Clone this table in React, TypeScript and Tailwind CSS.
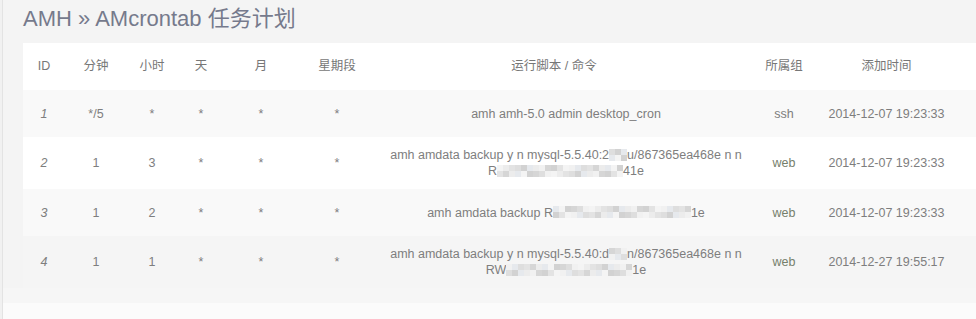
import React from "react";

const palette = [
  "bg-[#ececec]",
  "bg-[#dedede]",
  "bg-[#f4f4f4]",
  "bg-[#d6d6d6]",
  "bg-[#e6e9ed]",
  "bg-[#e3e3e3]",
  "bg-[#f1f1f1]",
  "bg-[#d2d2d2]",
];

// pixelated redaction block
const Mosaic = ({ width, seed = 0 }: { width: number; seed?: number }) => {
  const cells = Math.max(1, Math.round(width / 6));
  return (
    <span className="inline-flex flex-col align-middle -mt-[2px]">
      {[0, 1].map((row) => (
        <span key={row} className="flex">
          {Array.from({ length: cells }).map((_, i) => (
            <span
              key={i}
              className={`w-[6px] h-[6px] ${palette[(i * 5 + row * 3 + seed + ((i * i) % 3)) % palette.length]}`}
            />
          ))}
        </span>
      ))}
    </span>
  );
};

type Row = {
  id: string;
  min: string;
  hour: string;
  day: string;
  month: string;
  week: string;
  script: React.ReactNode;
  group: string;
  time: string;
  bg: string;
  h: string;
};

const rows: Row[] = [
  {
    id: "1",
    min: "*/5",
    hour: "*",
    day: "*",
    month: "*",
    week: "*",
    script: <>amh amh-5.0 admin desktop_cron</>,
    group: "ssh",
    time: "2014-12-07 19:23:33",
    bg: "bg-[#f9f9f9]",
    h: "h-[47px]",
  },
  {
    id: "2",
    min: "1",
    hour: "3",
    day: "*",
    month: "*",
    week: "*",
    script: (
      <>
        <div>
          amh amdata backup y n mysql-5.5.40:2<Mosaic width={18} seed={1} />u/867365ea468e n n
        </div>
        <div>
          R<Mosaic width={126} seed={2} />41e
        </div>
      </>
    ),
    group: "web",
    time: "2014-12-07 19:23:33",
    bg: "bg-white",
    h: "h-[52px]",
  },
  {
    id: "3",
    min: "1",
    hour: "2",
    day: "*",
    month: "*",
    week: "*",
    script: (
      <>
        amh amdata backup R<Mosaic width={138} seed={4} />1e
      </>
    ),
    group: "web",
    time: "2014-12-07 19:23:33",
    bg: "bg-[#f9f9f9]",
    h: "h-[47px]",
  },
  {
    id: "4",
    min: "1",
    hour: "1",
    day: "*",
    month: "*",
    week: "*",
    script: (
      <>
        <div>
          amh amdata backup y n mysql-5.5.40:d<Mosaic width={18} seed={3} />n/867365ea468e n n
        </div>
        <div>
          RW<Mosaic width={126} seed={6} />1e
        </div>
      </>
    ),
    group: "web",
    time: "2014-12-27 19:55:17",
    bg: "bg-[#f5f5f5]",
    h: "h-[52px]",
  },
];

export default function App() {
  return (
    <div
      className="min-h-screen bg-[#f4f4f4] flex text-[12.5px] text-[#7e7e7e]"
      style={{ fontFamily: '"Liberation Sans", Arial, "Noto Sans CJK SC", sans-serif' }}
    >
      <div className="w-[2px] bg-[#f1f1f1]" />
      <div className="flex-1 border-l border-[#e3e3e3] flex flex-col overflow-hidden">
        <h1 className="h-[43px] pl-[20px] text-[22px] leading-[37px] text-[#767a8c] font-normal whitespace-nowrap">
          AMH » AMcrontab 任务计划
        </h1>
        <div className="pl-[20px]">
          <table className="w-[953px] table-fixed border-collapse">
            <colgroup>
              <col className="w-[42px]" />
              <col className="w-[62px]" />
              <col className="w-[50px]" />
              <col className="w-[48px]" />
              <col className="w-[72px]" />
              <col className="w-[80px]" />
              <col className="w-[378px]" />
              <col className="w-[58px]" />
              <col className="w-[163px]" />
            </colgroup>
            <thead>
              <tr className="h-[47px] bg-white text-[#777]">
                <th className="font-normal text-center">ID</th>
                <th className="font-normal text-center">分钟</th>
                <th className="font-normal text-center">小时</th>
                <th className="font-normal text-center">天</th>
                <th className="font-normal text-center">月</th>
                <th className="font-normal text-center">星期段</th>
                <th className="font-normal text-center pr-[24px]">运行脚本 / 命令</th>
                <th className="font-normal text-center">所属组</th>
                <th className="font-normal text-center pr-[16px]">添加时间</th>
              </tr>
            </thead>
            <tbody>
              {rows.map((r) => (
                <tr key={r.id} className={`${r.h} ${r.bg} leading-[16px]`}>
                  <td className="text-center italic">{r.id}</td>
                  <td className="text-center">{r.min}</td>
                  <td className="text-center">{r.hour}</td>
                  <td className="text-center">{r.day}</td>
                  <td className="text-center">{r.month}</td>
                  <td className="text-center">{r.week}</td>
                  <td className="text-center whitespace-nowrap">{r.script}</td>
                  <td className={`text-center ${r.group === "web" ? "text-[#76806c]" : ""}`}>{r.group}</td>
                  <td className="text-center pr-[16px] whitespace-nowrap">{r.time}</td>
                </tr>
              ))}
            </tbody>
          </table>
        </div>
        <div className="h-[15px] bg-[#f6f6f6]" />
        <div className="flex-1 bg-[#fbfbfb]" />
      </div>
    </div>
  );
}
